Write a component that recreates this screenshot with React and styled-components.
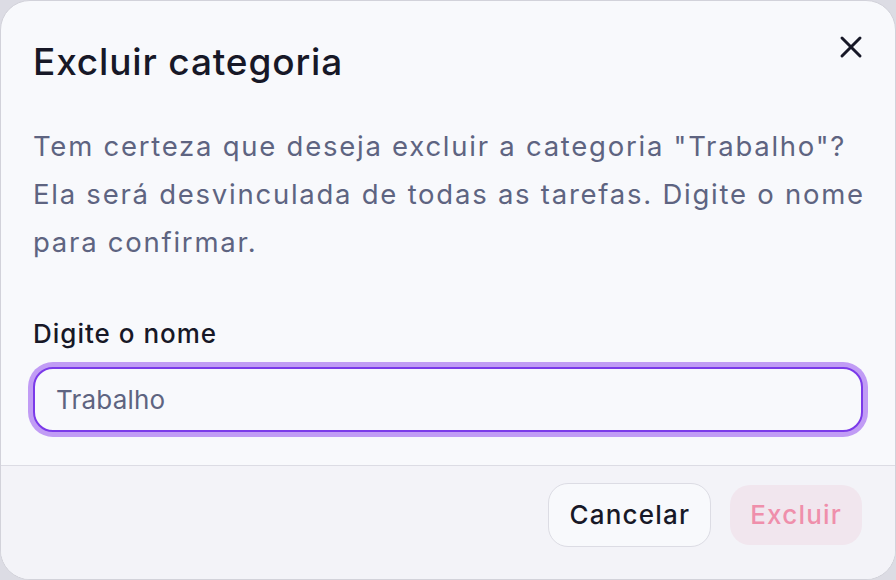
import React from "react";
import styled, { createGlobalStyle } from "styled-components";
import { X } from "lucide-react";

const Global = createGlobalStyle`
  html, body { margin: 0; padding: 0; background: #dcdce4; }
  * { box-sizing: border-box; }
  body { font-family: Inter, "Noto Sans", sans-serif; }
`;

const Dialog = styled.div`
  width: 896px;
  height: 580px;
  border: 1px solid #d2d2da;
  border-radius: 30px;
  background: #f8f9fc;
  overflow: hidden;
  display: flex;
  flex-direction: column;
  position: relative;
`;

const Body = styled.div`
  flex: 1;
  padding: 37px 32px 0 32px;
  display: flex;
  flex-direction: column;
`;

const Title = styled.h2`
  margin: 0;
  font-size: 37px;
  line-height: 48px;
  font-weight: 500;
  color: #171827;
  letter-spacing: 0.85px;
`;

const Description = styled.p`
  margin: 36px -10px 0 0;
  font-size: 27.5px;
  line-height: 48px;
  font-weight: 400;
  color: #5e6481;
  letter-spacing: 1.75px;
`;

const Label = styled.label`
  margin-top: 50px;
  font-size: 26px;
  line-height: 36px;
  font-weight: 500;
  color: #171827;
  letter-spacing: 1px;
`;

const Input = styled.input`
  margin-top: 15px;
  height: 65px;
  width: 100%;
  border: 2px solid #7b3ae9;
  border-radius: 20px;
  box-shadow: 0 0 0 5px #c19cf5;
  background: #f8f9fc;
  padding: 0 21px;
  font-family: Inter, "Noto Sans", sans-serif;
  font-size: 26px;
  color: #5e6481;
  letter-spacing: 0.2px;
  outline: none;
`;

const CloseButton = styled.button`
  position: absolute;
  top: 28px;
  right: 26px;
  width: 36px;
  height: 36px;
  padding: 0;
  border: none;
  background: transparent;
  color: #171827;
  display: flex;
  align-items: center;
  justify-content: center;
`;

const Footer = styled.div`
  height: 114px;
  border-top: 1px solid #dcdce4;
  background: #f3f3f8;
  display: flex;
  align-items: center;
  justify-content: flex-end;
  gap: 19px;
  padding: 0 33px 16px 0;
`;

const Button = styled.button`
  height: ${(p) => (p.$primary ? "60px" : "64px")};
  padding: 0 20px;
  border-radius: 20px;
  border: ${(p) => (p.$primary ? "none" : "1.5px solid #dcdce4")};
  background: ${(p) => (p.$primary ? "#f1e6ee" : "#f8f9fc")};
  color: ${(p) => (p.$primary ? "#ef8fab" : "#171827")};
  font-family: Inter, "Noto Sans", sans-serif;
  font-size: 26px;
  font-weight: 500;
  letter-spacing: 1.2px;
`;

export default function App() {
  return (
    <>
      <Global />
      <Dialog>
        <CloseButton aria-label="Fechar">
          <X size={36} strokeWidth={2} />
        </CloseButton>
        <Body>
          <Title>Excluir categoria</Title>
          <Description>
            Tem certeza que deseja excluir a categoria "Trabalho"? Ela será
            desvinculada de todas as tarefas. Digite o nome para confirmar.
          </Description>
          <Label htmlFor="nome">Digite o nome</Label>
          <Input id="nome" defaultValue="Trabalho" />
        </Body>
        <Footer>
          <Button>Cancelar</Button>
          <Button $primary disabled>
            Excluir
          </Button>
        </Footer>
      </Dialog>
    </>
  );
}
